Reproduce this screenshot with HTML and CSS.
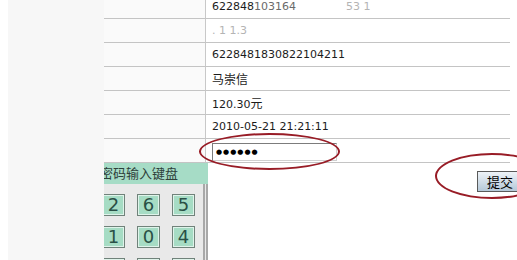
FILE: index.html
```html
<!DOCTYPE html>
<html>
<head>
    <meta charset="utf-8">
    <title>支付确认</title>
    <link rel="stylesheet" href="styles.css">
</head>
<body>
    <div class="page">
        <div class="side"></div>
        <div class="main">
            <table class="info" cellpadding="0" cellspacing="0">
                <tr>
                    <td class="label"></td>
                    <td class="value"><span>622848</span><span class="fade">103164</span><span class="gap"></span><span class="faint">53 1</span></td>
                </tr>
                <tr>
                    <td class="label"></td>
                    <td class="value"><span class="faint">. 1 1.3</span></td>
                </tr>
                <tr>
                    <td class="label"></td>
                    <td class="value">6228481830822104211</td>
                </tr>
                <tr>
                    <td class="label"></td>
                    <td class="value"><span class="cn">马崇信</span></td>
                </tr>
                <tr>
                    <td class="label"></td>
                    <td class="value">120.30<span class="cn">元</span></td>
                </tr>
                <tr>
                    <td class="label"></td>
                    <td class="value">2010-05-21 21:21:11</td>
                </tr>
                <tr>
                    <td class="label"></td>
                    <td class="value"><div class="pwd">●●●●●●</div></td>
                </tr>
            </table>

            <div class="lower">
                <div class="keypad">
                    <div class="kp-title">密码输入键盘</div>
                    <div class="kp-body">
                        <span class="key">2</span>
                        <span class="key">6</span>
                        <span class="key">5</span>
                        <span class="key">1</span>
                        <span class="key">0</span>
                        <span class="key">4</span>
                        <span class="key">7</span>
                        <span class="key">9</span>
                        <span class="key">3</span>
                    </div>
                </div>
                <div class="actions">
                    <button class="submit" type="button">提交</button>
                </div>
            </div>
        </div>
    </div>

    <div class="mark mark-pwd"></div>
    <div class="mark mark-submit"></div>
</body>
</html>
```

FILE: styles.css
```css
body { margin: 0; background-color: #fff; font-family: "DejaVu Sans", "Noto Sans CJK SC", sans-serif; font-size: 11px; color: #1c1c1c; }
.page { display: flex; height: 260px; overflow: hidden; }
.side { flex: none; width: 96px; margin-left: 8px; background-color: #f7f7f7; }
.main { flex: none; width: 413px; overflow: hidden; }

table.info { width: 406px; margin-top: -5px; border-collapse: separate; border-spacing: 0; }
table.info td { height: 23px; padding: 0; border-bottom: solid 1px #c4c4c4; vertical-align: middle; }
td.label { width: 101px; background-color: #fafafa; border-right: solid 1px #c8c8c8; }
td.value { padding-left: 6px !important; background-color: #fff; white-space: nowrap; }
td .cn { font-size: 12px; }
td .fade { color: #6a6a6a; }
td .gap { display: inline-block; width: 50px; }
td .faint { color: #b4b4b4; }

.pwd { width: 120px; height: 16px; margin-top: 2px; padding-left: 3px; border: solid 1px; border-color: #7c7c7c #d0d0d0 #d0d0d0 #7c7c7c; font-size: 7px; line-height: 16px; letter-spacing: 1px; color: #000; }

.lower { display: flex; }
.keypad { flex: none; width: 116px; margin-left: -12px; }
.kp-title { height: 21px; padding-left: 8px; line-height: 21px; font-size: 13px; color: #2e403a; background-color: #a6dcc6; }
.kp-body { box-sizing: border-box; height: 120px; padding: 10px 0 0 10px; display: grid; grid-template-columns: repeat(3, 23px); grid-auto-rows: 22px; column-gap: 12px; row-gap: 10px; background-color: #e9e9e9; border-right: double 5px #a8a8a8; }
.key { box-sizing: border-box; border: solid 1px #70827a; box-shadow: inset 0 0 0 1px #dff3ea; background-color: #a6dcc4; color: #2a5046; font-size: 18px; line-height: 20px; text-align: center; }

.actions { flex: none; padding-top: 8px; margin-left: 269px; }
.submit { width: 50px; height: 21px; padding: 0 0 0 9px; text-align: left; border: solid 1px #5a5a5a; background: linear-gradient(#eef3f8, #b4c8d8); font-family: "Noto Sans CJK SC", sans-serif; font-size: 13px; line-height: 19px; color: #000; }

.mark { position: absolute; border: solid 2px #981c26; border-radius: 50%; }
.mark-pwd { left: 199px; top: 133px; width: 137px; height: 33px; }
.mark-submit { left: 435px; top: 153px; width: 110px; height: 42px; }
```
